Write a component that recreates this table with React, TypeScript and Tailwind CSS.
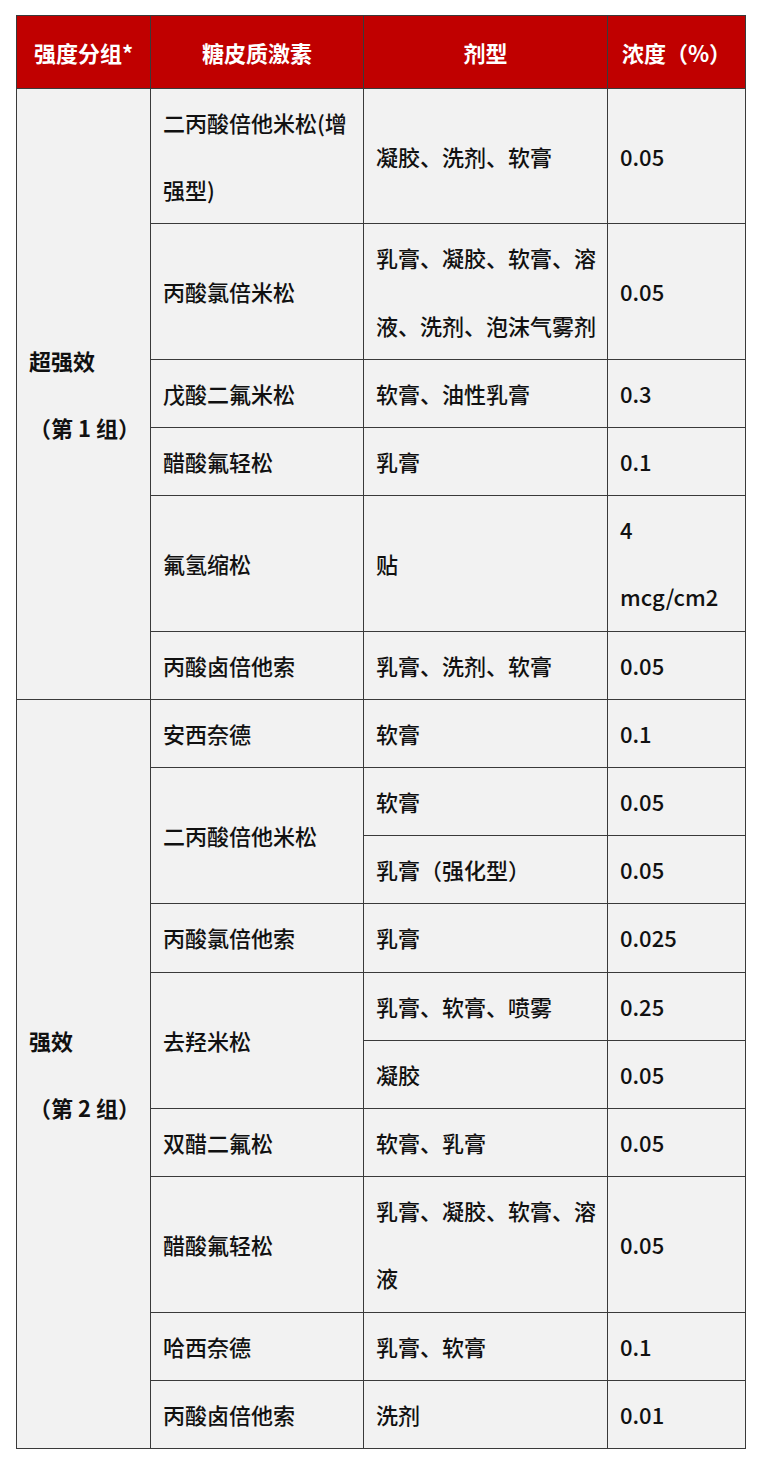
const cell = 'border border-[#3a3a3a] px-3 py-0 text-left align-middle';

type Row = { drug?: string[]; drugSpan?: number; form: string[]; conc: string[] };

const group1: Row[] = [
  { drug: ['二丙酸倍他米松(增', '强型)'], form: ['凝胶、洗剂、软膏'], conc: ['0.05'] },
  { drug: ['丙酸氯倍米松'], form: ['乳膏、凝胶、软膏、溶', '液、洗剂、泡沫气雾剂'], conc: ['0.05'] },
  { drug: ['戊酸二氟米松'], form: ['软膏、油性乳膏'], conc: ['0.3'] },
  { drug: ['醋酸氟轻松'], form: ['乳膏'], conc: ['0.1'] },
  { drug: ['氟氢缩松'], form: ['贴'], conc: ['4', 'mcg/cm2'] },
  { drug: ['丙酸卤倍他索'], form: ['乳膏、洗剂、软膏'], conc: ['0.05'] },
];

const group2: Row[] = [
  { drug: ['安西奈德'], form: ['软膏'], conc: ['0.1'] },
  { drug: ['二丙酸倍他米松'], drugSpan: 2, form: ['软膏'], conc: ['0.05'] },
  { form: ['乳膏（强化型）'], conc: ['0.05'] },
  { drug: ['丙酸氯倍他索'], form: ['乳膏'], conc: ['0.025'] },
  { drug: ['去羟米松'], drugSpan: 2, form: ['乳膏、软膏、喷雾'], conc: ['0.25'] },
  { form: ['凝胶'], conc: ['0.05'] },
  { drug: ['双醋二氟松'], form: ['软膏、乳膏'], conc: ['0.05'] },
  { drug: ['醋酸氟轻松'], form: ['乳膏、凝胶、软膏、溶', '液'], conc: ['0.05'] },
  { drug: ['哈西奈德'], form: ['乳膏、软膏'], conc: ['0.1'] },
  { drug: ['丙酸卤倍他索'], form: ['洗剂'], conc: ['0.01'] },
];

function Lines({ items }: { items: string[] }) {
  return (
    <>
      {items.map((t, i) => (
        <span key={i} className="block whitespace-nowrap">
          {t}
        </span>
      ))}
    </>
  );
}

function Group({ title, sub, rows }: { title: string; sub: string; rows: Row[] }) {
  return (
    <>
      {rows.map((r, i) => (
        <tr key={i}>
          {i === 0 && (
            <td rowSpan={rows.length} className={`${cell} font-bold`}>
              <span className="block">{title}</span>
              <span className="block">{sub}</span>
            </td>
          )}
          {r.drug && (
            <td rowSpan={r.drugSpan ?? 1} className={`${cell} font-medium`}>
              <Lines items={r.drug} />
            </td>
          )}
          <td className={`${cell} font-medium`}>
            <Lines items={r.form} />
          </td>
          <td className={`${cell} font-medium`}>
            <Lines items={r.conc} />
          </td>
        </tr>
      ))}
    </>
  );
}

export default function App() {
  return (
    <div className="min-h-[1457px] bg-white px-4 pt-[15px] font-['Noto_Sans_CJK_SC',sans-serif]">
      <table className="w-[729px] table-fixed border-collapse bg-[#f2f2f2] text-[22px] leading-[67.2px] text-[#111]">
        <colgroup>
          <col className="w-[134px]" />
          <col className="w-[213px]" />
          <col className="w-[244px]" />
          <col className="w-[138px]" />
        </colgroup>
        <thead>
          <tr className="h-[73px] bg-[#c00000] text-white">
            <th className="border border-[#3a3a3a] text-center font-bold leading-none">强度分组*</th>
            <th className="border border-[#3a3a3a] text-center font-bold leading-none">糖皮质激素</th>
            <th className="border border-[#3a3a3a] text-center font-bold leading-none">剂型</th>
            <th className="border border-[#3a3a3a] text-center font-bold leading-none">浓度（%）</th>
          </tr>
        </thead>
        <tbody>
          <Group title="超强效" sub="（第 1 组）" rows={group1} />
          <Group title="强效" sub="（第 2 组）" rows={group2} />
        </tbody>
      </table>
    </div>
  );
}
